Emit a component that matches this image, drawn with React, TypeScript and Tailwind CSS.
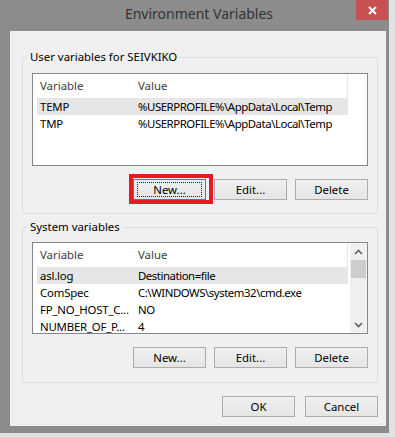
import React from 'react'

type Row = { name: string; value: string }

const userVars: Row[] = [
  { name: 'TEMP', value: '%USERPROFILE%\\AppData\\Local\\Temp' },
  { name: 'TMP', value: '%USERPROFILE%\\AppData\\Local\\Temp' },
]

const systemVars: Row[] = [
  { name: 'asl.log', value: 'Destination=file' },
  { name: 'ComSpec', value: 'C:\\WINDOWS\\system32\\cmd.exe' },
  { name: 'FP_NO_HOST_C...', value: 'NO' },
  { name: 'NUMBER_OF_P...', value: '4' },
]

function WinButton({ label, focused }: { label: string; focused?: boolean }) {
  return (
    <div className="relative">
      <button
        className={
          'w-[73px] h-[21px] flex items-center justify-center border bg-gradient-to-b from-[#f0f0f0] to-[#e5e5e5] text-[11.4px] leading-none text-black ' +
          (focused ? 'border-[#3c7fb1]' : 'border-[#acacac]')
        }
      >
        {focused ? (
          <span className="w-[65px] h-[15px] flex items-center justify-center border border-dotted border-[#222]">
            {label}
          </span>
        ) : (
          label
        )}
      </button>
      {focused && (
        <div className="absolute left-[-4px] top-[-5px] right-[-7px] bottom-[-4px] border-[4px] border-[#e41b23] pointer-events-none" />
      )}
    </div>
  )
}

function Chevron({ up }: { up?: boolean }) {
  return (
    <svg width="9" height="6" viewBox="0 0 9 6">
      <path
        d={up ? 'M1 5 L4.5 1.5 L8 5' : 'M1 1 L4.5 4.5 L8 1'}
        fill="none"
        stroke="#606060"
        strokeWidth="1.6"
      />
    </svg>
  )
}

function ListBox({ rows, height, scroll }: { rows: Row[]; height: string; scroll?: boolean }) {
  return (
    <div className={'w-[336px] border border-[#828790] bg-white flex overflow-hidden ' + height}>
      <div className="flex-1 flex flex-col min-w-0">
        <div className="flex items-center shrink-0 h-[24px]">
          <div className="ml-[4px] w-[97px] shrink-0 pl-[3px] text-[#3c3c3c]">Variable</div>
          <div className="w-[214px] shrink-0 pl-[4px] h-full flex items-center border-r border-[#e5e5e5] text-[#3c3c3c]">
            Value
          </div>
        </div>
        {rows.map((r, i) => (
          <div
            key={r.name}
            className={'ml-[4px] w-[311px] h-[17px] flex items-center shrink-0 ' + (i === 0 ? 'bg-[#e6e6e6]' : '')}
          >
            <div className="w-[97px] shrink-0 pl-[3px] whitespace-nowrap tracking-[-0.2px]">{r.name}</div>
            <div className="pl-[4px] whitespace-nowrap tracking-[-0.45px]">{r.value}</div>
          </div>
        ))}
      </div>
      {scroll && (
        <div className="w-[17px] shrink-0 bg-[#f0f0f0] flex flex-col">
          <div className="h-[17px] flex items-center justify-center">
            <Chevron up />
          </div>
          <div className="h-[18px] mx-[1px] bg-[#cdcdcd]" />
          <div className="flex-1" />
          <div className="h-[17px] flex items-center justify-center">
            <Chevron />
          </div>
        </div>
      )}
    </div>
  )
}

export default function App() {
  return (
    <div className="w-[395px] h-[437px] bg-[#e2e2e2] font-['Segoe_UI','Noto_Sans',sans-serif] text-[11.4px] text-black">
      <div className="w-[389px] h-[433px] bg-[#8c8c8c] flex flex-col">
        <div className="h-[31px] flex items-start shrink-0">
          <div className="w-[42px]" />
          <div className="flex-1 text-center text-[14px] leading-[20px] pt-[4px] text-[#333]">
            Environment Variables
          </div>
          <div className="w-[32px] h-[20px] mr-[1px] bg-[#c75050] flex items-center justify-center">
            <svg width="9" height="9" viewBox="0 0 9 9">
              <path d="M1 1 L8 8 M8 1 L1 8" stroke="#fff" strokeWidth="2" />
            </svg>
          </div>
        </div>

        <div className="ml-[10px] w-[376px] h-[395px] bg-[#f0f0f0] pl-[12px] pt-[18px] flex flex-col">
          <fieldset className="w-[356px] border border-[#dcdcdc] rounded-[3px] px-[9px] pb-[13px]">
            <legend className="-ml-[5px] px-[3px] leading-[16px] text-black">User variables for SEIVKIKO</legend>
            <div className="mt-[8px]">
              <ListBox rows={userVars} height="h-[93px]" />
            </div>
            <div className="mt-[13px] flex justify-end gap-[8px]">
              <WinButton label="New..." focused />
              <WinButton label="Edit..." />
              <WinButton label="Delete" />
            </div>
          </fieldset>

          <fieldset className="mt-[5px] w-[356px] border border-[#dcdcdc] rounded-[3px] px-[9px] pb-[14px]">
            <legend className="-ml-[5px] px-[3px] leading-[16px] text-black">System variables</legend>
            <div className="mt-[7px]">
              <ListBox rows={systemVars} height="h-[92px]" scroll />
            </div>
            <div className="mt-[13px] flex justify-end gap-[8px]">
              <WinButton label="New..." />
              <WinButton label="Edit..." />
              <WinButton label="Delete" />
            </div>
          </fieldset>

          <div className="mt-[13px] w-[356px] flex justify-end gap-[10px]">
            <WinButton label="OK" />
            <WinButton label="Cancel" />
          </div>
        </div>
      </div>
    </div>
  )
}
